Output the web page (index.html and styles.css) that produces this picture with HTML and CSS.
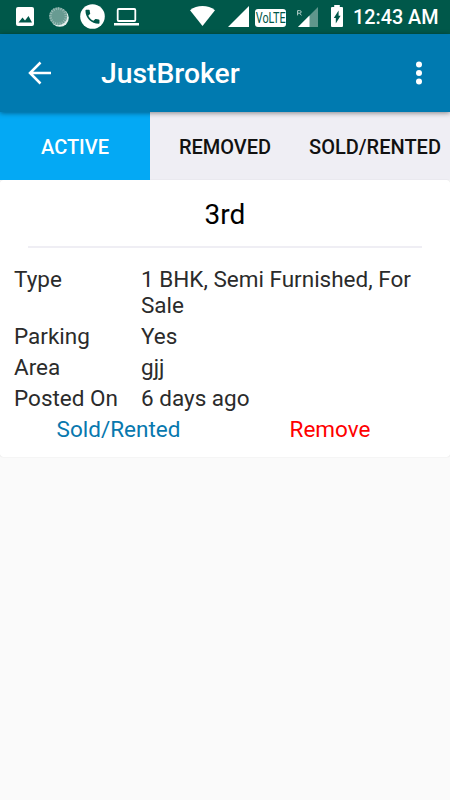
FILE: index.html
```html
<!DOCTYPE html>
<html lang="en">
<head>
    <meta charset="UTF-8" />
    <meta name="viewport" content="width=device-width, initial-scale=1.0" />
    <title>JustBroker</title>
    <link rel="stylesheet" href="styles.css">
</head>
<body>
    <div class="statusbar">
        <div class="notifications">
            <svg width="18" height="19" viewBox="0 0 18 19">
                <rect width="18" height="19" rx="2" fill="#fff" />
                <path d="M2.5 15.5l4-5 2.5 3 3.5-4.5 3.5 6.5z" fill="#00584a" />
            </svg>
            <svg width="20" height="20" viewBox="0 0 20 20">
                <circle cx="10.8" cy="10.8" r="9" fill="#e4efed" />
                <circle cx="9.2" cy="9.2" r="9" fill="#689b92" />
                <circle cx="9.2" cy="9.2" r="7.7" fill="none" stroke="#9bbdb7" stroke-width="2.5" stroke-dasharray="1 1.4" />
            </svg>
            <svg width="25" height="25" viewBox="0 0 25 25">
                <circle cx="12.5" cy="12.5" r="12.3" fill="#fff" />
                <path transform="translate(3.1 3.3) scale(.78)" d="M6.62 10.79c1.44 2.83 3.76 5.14 6.59 6.59l2.2-2.2c.27-.27.67-.36 1.02-.24 1.12.37 2.33.57 3.57.57.55 0 1 .45 1 1V20c0 .55-.45 1-1 1-9.39 0-17-7.61-17-17 0-.55.45-1 1-1h3.5c.55 0 1 .45 1 1 0 1.25.2 2.45.57 3.57.11.35.03.74-.25 1.02l-2.2 2.2z" fill="#00584a" />
            </svg>
            <svg width="25" height="18" viewBox="0 0 25 18">
                <rect x="3.7" y="1" width="17.6" height="12" rx="1" fill="none" stroke="#fff" stroke-width="1.8" />
                <path d="M0 15h25v2.5H0z" fill="#fff" />
            </svg>
        </div>
        <div class="system">
            <svg class="wifi" width="25" height="20" viewBox="0 0 25 20">
                <path d="M0 4.2C7-1.3 18-1.3 25 4.2L12.5 20z" fill="#fff" />
            </svg>
            <svg class="signal" width="21" height="21" viewBox="0 0 21 21">
                <path d="M21 0v21H0z" fill="#fff" />
            </svg>
            <span class="volte"><span>VoLTE</span></span>
            <svg class="roaming" width="21" height="20" viewBox="0 0 21 20">
                <path d="M21 0v20H1z" fill="#5f968c" />
                <path d="M12.5 8.5V20H1z" fill="#fff" />
                <path d="M.6 8.4V3.6h2q1.6 0 1.6 1.3T2.6 6.2h-2M2.7 6.2l1.7 2.2" fill="none" stroke="#b4cfca" />
            </svg>
            <svg class="battery" width="12" height="22" viewBox="0 0 12 22">
                <path d="M3.2 0h5.6v2H11q1 0 1 1v18q0 1-1 1H1q-1 0-1-1V3q0-1 1-1h2.2z" fill="#fff" />
                <path d="M7.6 5.5v5.2h2l-4.8 7.8v-5.5h-2z" fill="#00584a" />
            </svg>
            <span class="time">12:43 AM</span>
        </div>
    </div>

    <div class="navbar">
        <svg width="24" height="24" viewBox="0 0 24 24">
            <path d="M12.5 1.5L2 12l10.5 10.5M2 12h21" fill="none" stroke="#fff" stroke-width="2.5" />
        </svg>
        <h1>JustBroker</h1>
        <svg class="menu" width="6" height="24" viewBox="0 0 6 24">
            <circle cx="3" cy="3.5" r="3" fill="#fff" />
            <circle cx="3" cy="12" r="3" fill="#fff" />
            <circle cx="3" cy="20.5" r="3" fill="#fff" />
        </svg>
    </div>

    <div class="tabs">
        <div class="tab active"><span>ACTIVE</span></div>
        <div class="tab"><span>REMOVED</span></div>
        <div class="tab"><span>SOLD/RENTED</span></div>
    </div>

    <div class="card">
        <h2>3rd</h2>
        <div class="details">
            <span>Type</span><span>1 BHK, Semi Furnished, For Sale</span>
            <span>Parking</span><span>Yes</span>
            <span>Area</span><span>gjj</span>
            <span>Posted On</span><span>6 days ago</span>
        </div>
        <div class="actions">
            <a class="sold">Sold/Rented</a>
            <a class="remove">Remove</a>
        </div>
    </div>
</body>
</html>
```
FILE: styles.css
```css
* {
    margin: 0;
    padding: 0;
    box-sizing: border-box;
}
body {
    font-family: Roboto, sans-serif;
    background-color: #fafafa;
    min-height: 800px;
}
svg {
    display: block;
    flex-shrink: 0;
}
.statusbar {
    height: 34px;
    background-color: #00584a;
    display: flex;
    justify-content: space-between;
    padding: 0 13px 0 16px;
    color: white;
}
.notifications {
    display: flex;
    align-items: center;
    gap: 11px;
    height: 33px;
}
.notifications svg:nth-child(2) {
    margin-left: 4px;
}
.notifications svg:last-child {
    margin-left: -2px;
}
.system {
    display: flex;
    align-items: flex-start;
}
.wifi {
    margin-top: 6px;
}
.signal {
    margin: 6px 0 0 13px;
}
.volte {
    width: 31px;
    height: 18px;
    margin: 9px 0 0 6px;
    background-color: white;
    border-radius: 3px;
    color: #00584a;
    font-size: 15px;
    line-height: 18px;
    display: flex;
    justify-content: center;
}
.volte span {
    transform: scaleX(0.72);
}
.roaming {
    margin: 7px 0 0 11px;
}
.battery {
    margin: 5px 0 0 13px;
}
.time {
    width: 84px;
    margin-left: 10px;
    font-size: 19.8px;
    font-weight: 500;
    line-height: 36px;
    white-space: nowrap;
}
.navbar {
    height: 78px;
    background-color: #007ab0;
    padding: 0 28px;
    display: flex;
    align-items: center;
    position: relative;
    box-shadow: 0 1px 5px rgba(0, 0, 0, 0.45);
}
.navbar h1 {
    color: white;
    font-size: 28.3px;
    font-weight: 500;
    line-height: 34px;
    margin: 2px 0 0 49px;
}
.navbar .menu {
    margin-left: auto;
}
.tabs {
    display: grid;
    grid-template-columns: repeat(3, 1fr);
    height: 68px;
    background-color: #efeef4;
}
.tab {
    display: flex;
    align-items: center;
    justify-content: center;
    padding-top: 2px;
    color: #111;
    font-size: 20px;
    font-weight: 500;
    white-space: nowrap;
}
.tab.active {
    background-color: #04a9f4;
    color: white;
}
.card {
    height: 277px;
    background-color: white;
    border-radius: 3px;
    box-shadow: 0 0 1px rgba(0, 0, 0, 0.2);
}
.card h2 {
    height: 68px;
    margin: 0 28px;
    border-bottom: 2px solid #efeef4;
    color: black;
    font-size: 28px;
    font-weight: 400;
    line-height: 69px;
    text-align: center;
}
.details {
    display: grid;
    grid-template-columns: 127px 1fr;
    row-gap: 5px;
    padding: 18px 14px 5px;
    color: #2b2b2b;
    font-size: 22.5px;
    line-height: 26px;
}
.actions {
    display: grid;
    grid-template-columns: 237px 1fr;
    padding-right: 27px;
    text-align: center;
    font-size: 22.5px;
    line-height: 26px;
}
.sold {
    color: #0878ae;
}
.remove {
    color: #ff0000;
}
```
